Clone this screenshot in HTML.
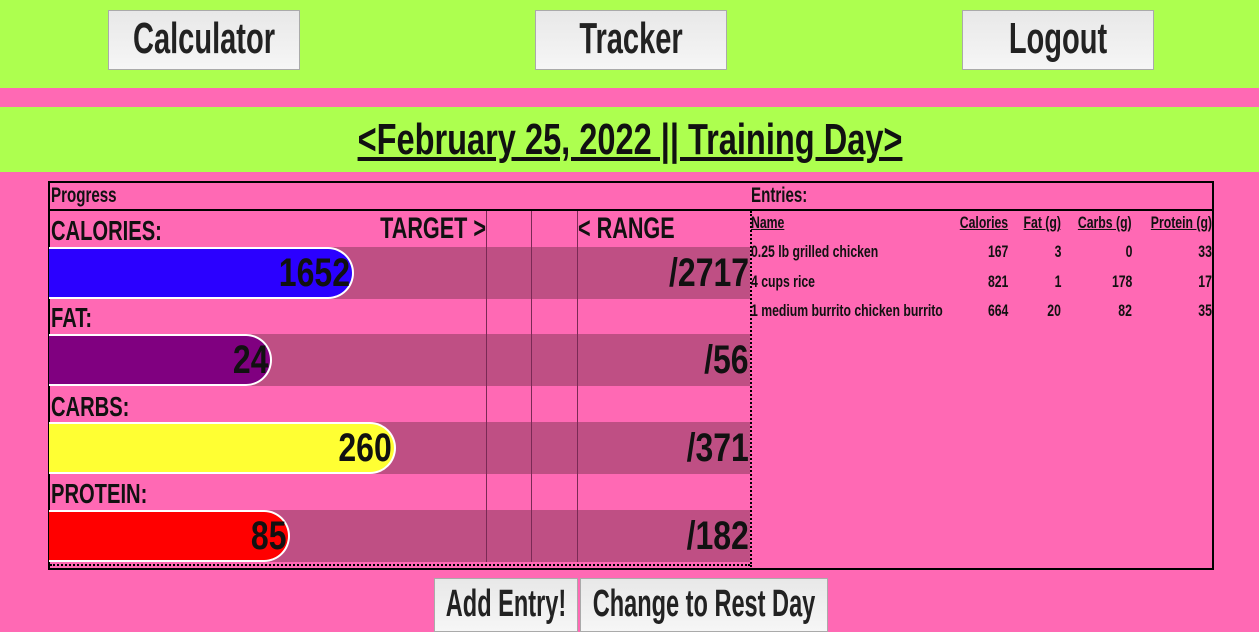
<!DOCTYPE html>
<html><head><style>
*{margin:0;padding:0;box-sizing:border-box}
body{width:1259px;height:630px;overflow:hidden;background:#ff69b4;font-family:"Liberation Sans Narrow","Liberation Sans",sans-serif;font-weight:bold;color:#111;position:relative}
.a{position:absolute}
.g{background:#adff4f}
.btn{position:absolute;background:linear-gradient(#e8e8e8,#f6f6f6);border:1px solid #aaa;color:#222;white-space:nowrap;overflow:hidden}
.ctr{position:absolute;left:50%;top:0;transform:translateX(-50%) scaleX(.66);white-space:nowrap}
.c{display:inline-block;transform:scaleX(.8);white-space:nowrap}
.s{transform:scaleX(.72)}
.l{transform-origin:left}
.r{transform-origin:right}
.track{position:absolute;left:49px;width:701px;height:52px;background:#bf4f84}
.fill{position:absolute;left:49px;height:52px;border:2px solid #fff;border-left:none;border-radius:0 26px 26px 0;text-align:right;padding-right:2px;font-size:40px;line-height:48px}
.lab{position:absolute;left:51px;font-size:28px;line-height:30px}
.tot{position:absolute;right:510px;font-size:40px;line-height:52px;text-align:right}
.vl{position:absolute;top:211px;height:351px;width:1px;background:#7a2a55}
.row{position:absolute;font-size:17px;line-height:20px}
</style></head><body>
<div class="a g" style="left:0;top:0;width:1259px;height:88px"></div>
<div class="a g" style="left:0;top:107px;width:1259px;height:65px"></div>
<div class="btn" style="left:108px;top:10px;width:192px;height:60px;font-size:44px;line-height:56px"><span class="ctr">Calculator</span></div>
<div class="btn" style="left:535px;top:10px;width:192px;height:60px;font-size:44px;line-height:56px"><span class="ctr">Tracker</span></div>
<div class="btn" style="left:962px;top:10px;width:192px;height:60px;font-size:44px;line-height:56px"><span class="ctr">Logout</span></div>
<div class="a" style="left:0;top:114px;width:1259px;height:52px;font-size:44px;line-height:52px"><span class="ctr" style="text-decoration:underline;transform:translateX(-50%) scaleX(.74)">&lt;February 25, 2022 || Training Day&gt;</span></div>

<div class="a" style="left:48px;top:181px;width:1166px;height:389px;border:2px solid #000"></div>
<div class="a" style="left:48px;top:209px;width:1166px;height:2px;background:#000"></div>
<div class="a" style="left:750px;top:211px;height:356px;border-left:2px dotted #000"></div>
<div class="a" style="left:50px;top:564px;width:700px;border-top:2px dotted #000"></div>
<div class="a" style="left:51px;top:184px;font-size:21px;line-height:24px"><span class="c s l">Progress</span></div>
<div class="a" style="left:751px;top:184px;font-size:21px;line-height:24px"><span class="c s l">Entries:</span></div>

<div class="track" style="top:247px"></div>
<div class="track" style="top:334px"></div>
<div class="track" style="top:422px"></div>
<div class="track" style="top:510px"></div>
<div class="vl" style="left:486px"></div><div class="vl" style="left:531px"></div><div class="vl" style="left:577px"></div>

<div class="lab" style="top:216px"><span class="c s l">CALORIES:</span></div>
<div class="a" style="left:300px;top:214px;width:186px;text-align:right;font-size:30px;line-height:30px"><span class="c s r">TARGET &gt;</span></div>
<div class="a" style="left:578px;top:214px;font-size:30px;line-height:30px"><span class="c s l">&lt; RANGE</span></div>
<div class="fill" style="top:247px;width:305px;background:#2b00ff"><span class="c r">1652</span></div>
<div class="tot" style="top:247px"><span class="c r">/2717</span></div>

<div class="lab" style="top:303px"><span class="c s l">FAT:</span></div>
<div class="fill" style="top:334px;width:223px;background:#800080"><span class="c r">24</span></div>
<div class="tot" style="top:334px"><span class="c r">/56</span></div>

<div class="lab" style="top:392px"><span class="c s l">CARBS:</span></div>
<div class="fill" style="top:422px;width:347px;background:#ffff33"><span class="c r">260</span></div>
<div class="tot" style="top:422px"><span class="c r">/371</span></div>

<div class="lab" style="top:479px"><span class="c s l">PROTEIN:</span></div>
<div class="fill" style="top:510px;width:241px;background:#ff0000"><span class="c r">85</span></div>
<div class="tot" style="top:510px"><span class="c r">/182</span></div>

<div class="row" style="left:751px;top:213px"><span class="c s l" style="text-decoration:underline">Name</span></div>
<div class="row" style="left:900px;top:213px;width:108px;text-align:right"><span class="c s r" style="text-decoration:underline">Calories</span></div>
<div class="row" style="left:1000px;top:213px;width:61px;text-align:right"><span class="c s r" style="text-decoration:underline">Fat (g)</span></div>
<div class="row" style="left:1050px;top:213px;width:82px;text-align:right"><span class="c s r" style="text-decoration:underline">Carbs (g)</span></div>
<div class="row" style="left:1120px;top:213px;width:92px;text-align:right"><span class="c s r" style="text-decoration:underline">Protein (g)</span></div>

<div class="row" style="left:751px;top:242px"><span class="c s l">0.25 lb grilled chicken</span></div>
<div class="row" style="left:751px;top:272px"><span class="c s l">4 cups rice</span></div>
<div class="row" style="left:751px;top:301px"><span class="c s l">1 medium burrito chicken burrito</span></div>

<div class="row" style="left:900px;top:242px;width:108px;text-align:right"><span class="c s r">167</span></div>
<div class="row" style="left:900px;top:272px;width:108px;text-align:right"><span class="c s r">821</span></div>
<div class="row" style="left:900px;top:301px;width:108px;text-align:right"><span class="c s r">664</span></div>
<div class="row" style="left:1000px;top:242px;width:61px;text-align:right"><span class="c s r">3</span></div>
<div class="row" style="left:1000px;top:272px;width:61px;text-align:right"><span class="c s r">1</span></div>
<div class="row" style="left:1000px;top:301px;width:61px;text-align:right"><span class="c s r">20</span></div>
<div class="row" style="left:1050px;top:242px;width:82px;text-align:right"><span class="c s r">0</span></div>
<div class="row" style="left:1050px;top:272px;width:82px;text-align:right"><span class="c s r">178</span></div>
<div class="row" style="left:1050px;top:301px;width:82px;text-align:right"><span class="c s r">82</span></div>
<div class="row" style="left:1120px;top:242px;width:92px;text-align:right"><span class="c s r">33</span></div>
<div class="row" style="left:1120px;top:272px;width:92px;text-align:right"><span class="c s r">17</span></div>
<div class="row" style="left:1120px;top:301px;width:92px;text-align:right"><span class="c s r">35</span></div>

<div class="btn" style="left:434px;top:578px;width:144px;height:54px;font-size:38px;line-height:50px"><span class="ctr" style="transform:translateX(-50%) scaleX(.62)">Add Entry!</span></div>
<div class="btn" style="left:580px;top:578px;width:248px;height:54px;font-size:38px;line-height:50px"><span class="ctr" style="transform:translateX(-50%) scaleX(.62)">Change to Rest Day</span></div>
</body></html>
